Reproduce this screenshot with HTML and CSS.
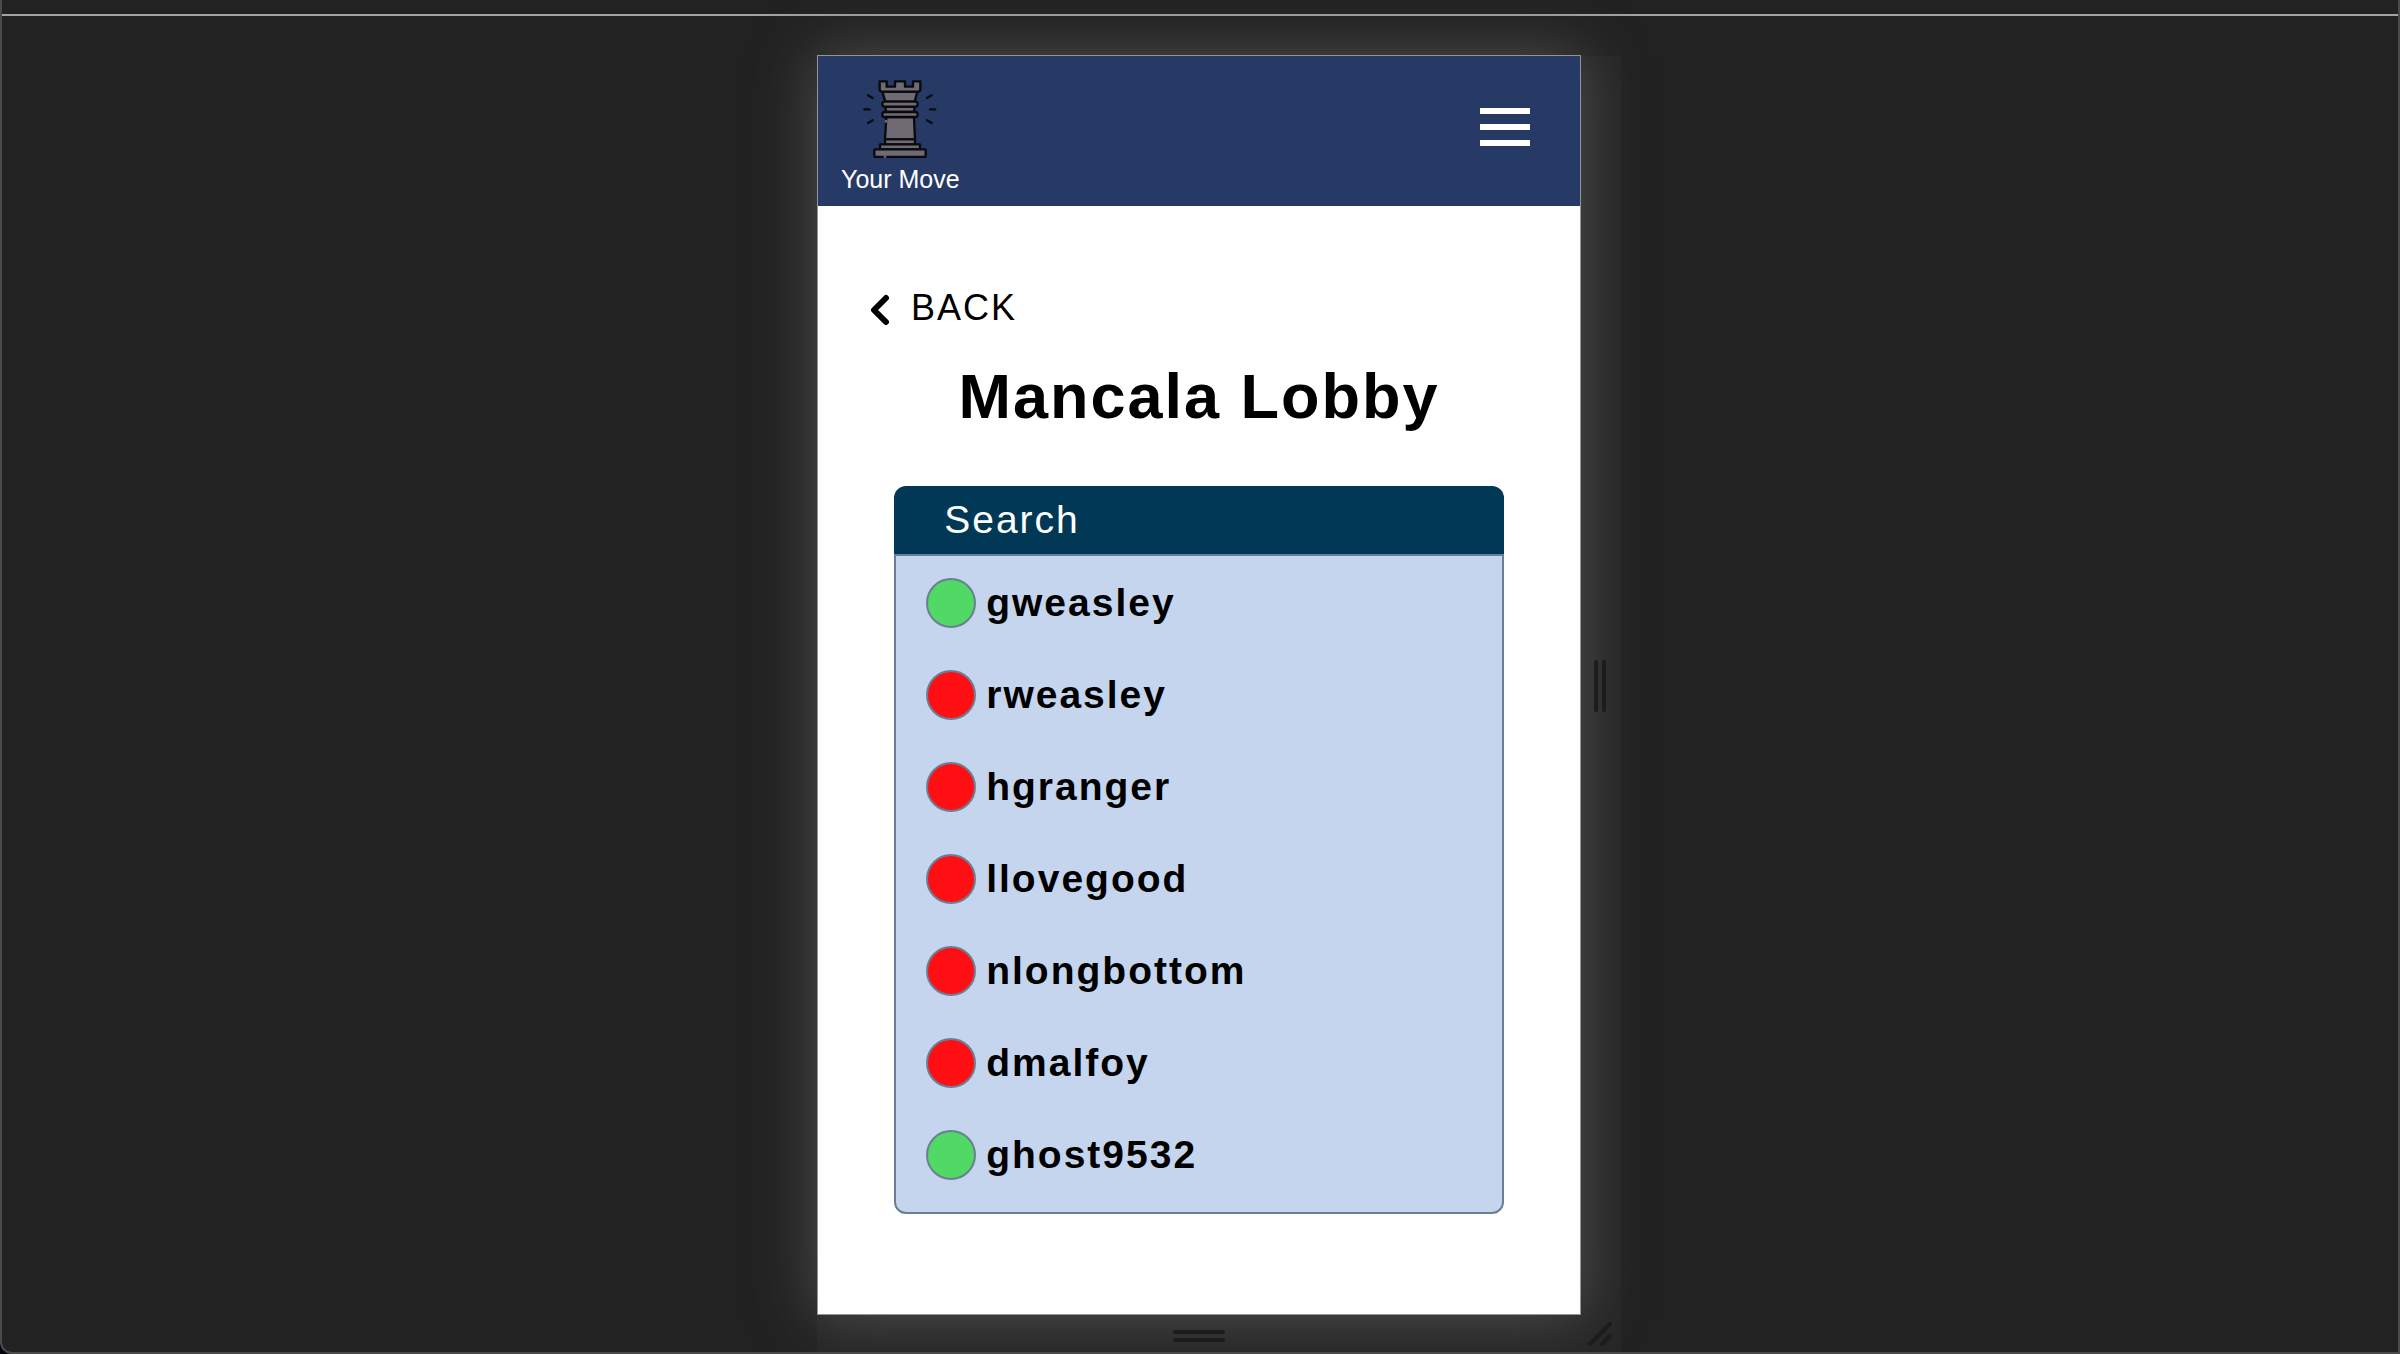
FILE: index.html
```html
<!DOCTYPE html>
<html lang="en">
<head>
<meta charset="utf-8">
<meta name="viewport" content="width=device-width, initial-scale=1">
<title>Mancala Lobby</title>
<link rel="stylesheet" href="styles.css">
</head>
<body>
<div class="window">
  <div class="ruler"></div>
  <div class="stage">
    <div class="device">
      <header class="topbar">
        <a class="brand" href="#">
          <svg class="brand-icon" viewBox="249 150 222 234" aria-hidden="true">
            <g fill="#6f6a73" stroke="#090a0e" stroke-width="7" stroke-linejoin="round" stroke-linecap="round">
              <path d="M307 185 L316 215 H404 L412 185Z"/>
              <path d="M299 154 H320 V170 H345 V154 H375 V170 H399 V154 H421 V177 Q421 185 414 185 H306 Q299 185 299 177Z"/>
              <path d="M317 230 H403 V246 H317Z"/>
              <rect x="307" y="215" width="106" height="15" rx="7"/>
              <path d="M319 261 H402 L405 328 H315Z"/>
              <rect x="307" y="246" width="106" height="15" rx="7"/>
              <path d="M315 328 H405 V343 H315Z"/>
              <path d="M300 343 H420 V358 H300Z"/>
              <rect x="283" y="358" width="154" height="23" rx="3"/>
              <path fill="none" d="M264 196 L278 204 M253 238 H269 M264 279 L278 271 M455 196 L441 204 M466 238 H450 M455 279 L441 271"/>
            </g>
            <path fill="none" stroke="#6f6a73" stroke-width="7" d="M318 270 V278 M311 380 H319"/>
          </svg>
          <span>Your Move</span>
        </a>
        <button class="menu" type="button" aria-label="Menu"><i></i><i></i><i></i></button>
      </header>
      <main class="lobby">
        <a class="back" href="#">
          <svg class="chevron" viewBox="0 0 20 32" aria-hidden="true"><path d="M16 4 L4 16 L16 28" fill="none" stroke="#000" stroke-width="6" stroke-linecap="round" stroke-linejoin="round"/></svg>
          BACK
        </a>
        <h1>Mancala Lobby</h1>
        <section class="card">
          <input class="search" type="text" placeholder="Search" aria-label="Search">
          <ul class="players">
            <li><span class="status online"></span>gweasley</li>
            <li><span class="status"></span>rweasley</li>
            <li><span class="status"></span>hgranger</li>
            <li><span class="status"></span>llovegood</li>
            <li><span class="status"></span>nlongbottom</li>
            <li><span class="status"></span>dmalfoy</li>
            <li><span class="status online"></span>ghost9532</li>
          </ul>
        </section>
      </main>
    </div>
    <div class="handle handle-right"><i></i><i></i></div>
    <div class="handle handle-bottom"><i></i><i></i></div>
    <div class="handle-corner">
      <svg viewBox="0 0 24 24" aria-hidden="true"><path d="M2 22 L22 2 M14 22 L22 14" fill="none" stroke="#1c1c1c" stroke-width="4" stroke-linecap="round"/></svg>
    </div>
  </div>
</div>
</body>
</html>
```
FILE: styles.css
```css
* {
  box-sizing: border-box;
}

body {
  margin: 0;
  background: #02050c;
  color: #000;
  font-family: "Liberation Sans", Arial, sans-serif;
}

a {
  color: inherit;
  text-decoration: none;
}

.window {
  display: flex;
  flex-direction: column;
  min-height: 100vh;
  border: 2px solid #4b4b4b;
  border-top: 0;
  border-bottom-left-radius: 12px;
  background: #222;
  overflow: hidden;
}

.ruler {
  height: 16px;
  border-bottom: 2px solid #a2a2a2;
}

.stage {
  flex: 1;
  display: grid;
  grid-template-columns: 1fr minmax(0, 764px) 1fr;
  grid-template-rows: 1fr 37px;
  padding: 39px 2px 0 0;
}

.device {
  grid-column: 2;
  display: flex;
  flex-direction: column;
  border: 1px solid #939399;
  background: #fff;
  box-shadow: 0 0 56px #505050;
}

.topbar {
  display: flex;
  align-items: flex-start;
  justify-content: space-between;
  padding: 24px 50px 13px 23px;
  background: #273a66;
}

.brand {
  display: flex;
  flex-direction: column;
  align-items: center;
  gap: 7px;
  color: #fff;
  font-size: 25px;
  line-height: 28px;
}

.brand-icon {
  width: 74px;
  height: 78px;
}

.menu {
  display: flex;
  flex-direction: column;
  gap: 10px;
  width: 50px;
  margin: 28px 0 0;
  padding: 0;
  border: 0;
  background: none;
}

.menu i {
  height: 6px;
  background: #fff;
}

.lobby {
  display: flex;
  flex-direction: column;
  padding: 82px 0 100px;
  letter-spacing: 2px;
}

.back {
  display: flex;
  align-items: center;
  align-self: flex-start;
  gap: 21px;
  margin-left: 52px;
  font-size: 36px;
  line-height: 40px;
}

.chevron {
  width: 20px;
  height: 32px;
  margin-top: 4px;
}

h1 {
  margin: 32px 0 54px;
  font-size: 63px;
  line-height: 72px;
  text-align: center;
}

.card {
  width: 80%;
  margin: 0 auto;
}

.search {
  display: block;
  width: 100%;
  height: 68px;
  padding: 0 50px;
  border: 0;
  border-radius: 12px 12px 0 0;
  background: #003856;
  color: #fff;
  font: inherit;
  font-size: 39px;
  letter-spacing: inherit;
}

.search::placeholder {
  color: #fff;
  opacity: 1;
}

.players {
  margin: 0;
  padding: 1px 30px 11px;
  border: 2px solid #6b7f94;
  border-radius: 0 0 12px 12px;
  background: #c4d5ed;
  list-style: none;
  font-size: 39px;
  font-weight: bold;
}

.players li {
  display: flex;
  align-items: center;
  gap: 10px;
  height: 92px;
}

.status {
  width: 50px;
  height: 50px;
  border: 2px solid #6b7f94;
  border-radius: 50%;
  background: #ff0f14;
}

.online {
  background: #50d964;
}

.handle {
  display: flex;
  align-items: center;
  justify-content: center;
  gap: 4px;
  background: rgb(255 255 255 / 2%);
}

.handle i {
  border-radius: 2px;
  background: #1c1c1c;
}

.handle-right {
  grid-column: 3;
  width: 40px;
  margin-top: 1px;
  padding-right: 2px;
}

.handle-right i {
  width: 4px;
  height: 52px;
}

.handle-bottom {
  grid-column: 2;
  flex-direction: column;
  padding-top: 5px;
}

.handle-bottom i {
  width: 52px;
  height: 4px;
}

.handle-corner {
  grid-column: 3;
  width: 40px;
  padding: 7px;
  background: rgb(255 255 255 / 2%);
}

.handle-corner svg {
  display: block;
  width: 24px;
  height: 24px;
}
```
